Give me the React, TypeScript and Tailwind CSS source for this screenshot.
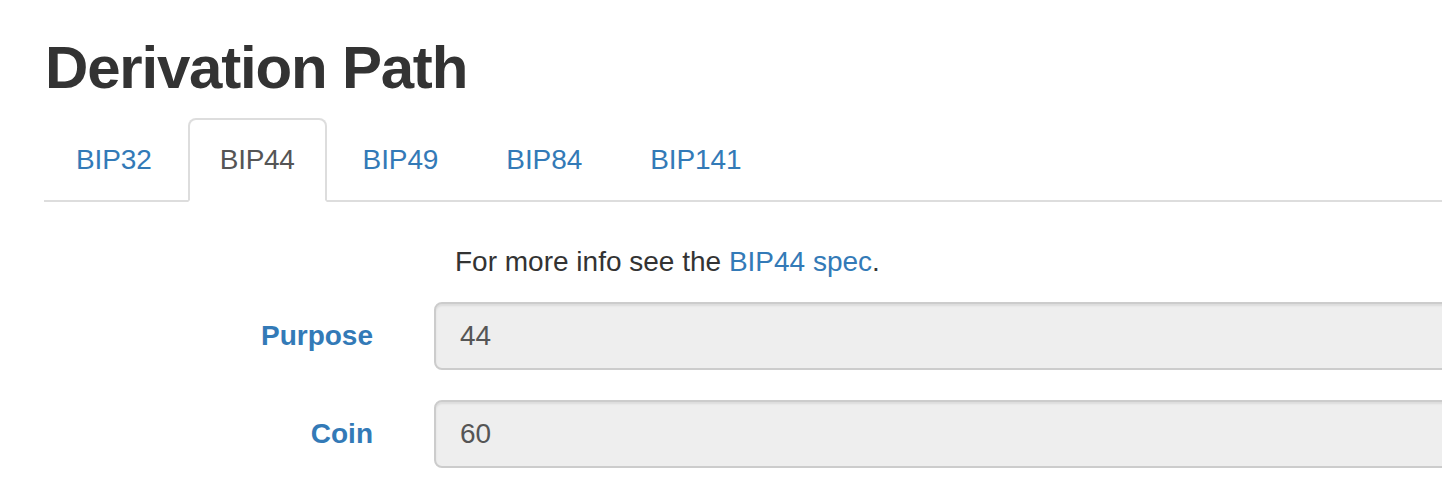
const tabs = ["BIP32", "BIP44", "BIP49", "BIP84", "BIP141"];

const fields = [
  { label: "Purpose", value: "44" },
  { label: "Coin", value: "60" },
];

const App = () => {
  return (
    <div className="min-h-screen w-full overflow-hidden bg-white font-['Liberation_Sans',Arial,sans-serif] text-[#333]">
      <div className="pl-[44px] pt-[35px]">
        {/* Heading */}
        <h2 className="mb-[17px] pl-[1px] text-[60px] font-bold leading-[66px] tracking-[-1.2px] text-[#333]">
          Derivation Path
        </h2>

        {/* Tabs */}
        <ul className="flex border-b-2 border-[#ddd]">
          {tabs.map((tab) => {
            const active = tab === "BIP44";
            return (
              <li key={tab} className="-mb-[2px]">
                <a
                  href="#"
                  className={
                    active
                      ? "mr-[4px] block rounded-t-[8px] border-2 border-[#ddd] border-b-transparent bg-white px-[30px] py-[20px] text-[28px] leading-[40px] tracking-[-0.3px] text-[#555]"
                      : "mr-[4px] block rounded-t-[8px] border-2 border-transparent px-[30px] py-[20px] text-[28px] leading-[40px] tracking-[-0.1px] text-[#337ab7]"
                  }
                >
                  {tab}
                </a>
              </li>
            );
          })}
        </ul>

        {/* Form */}
        <div className="pt-[40px]">
          <p className="mb-[20px] ml-[411px] text-[28px] leading-[40px] text-[#333]">
            For more info see the{" "}
            <a href="#" className="text-[#337ab7]">
              BIP44 spec
            </a>
            .
          </p>

          {fields.map((f) => (
            <div key={f.label} className="mb-[30px] flex">
              <label className="w-[329px] shrink-0 pt-[14px] text-right text-[28px] font-bold leading-[40px] text-[#337ab7]">
                {f.label}
              </label>
              <div className="ml-[61px] -mr-[40px] flex-1">
                <input
                  readOnly
                  value={f.value}
                  className="block h-[68px] w-full rounded-[8px] border-2 border-[#ccc] bg-[#eee] px-[24px] text-[28px] leading-[40px] text-[#555] shadow-[inset_0_2px_2px_rgba(0,0,0,0.075)] outline-none"
                />
              </div>
            </div>
          ))}
        </div>
      </div>
    </div>
  );
};

export default App;
